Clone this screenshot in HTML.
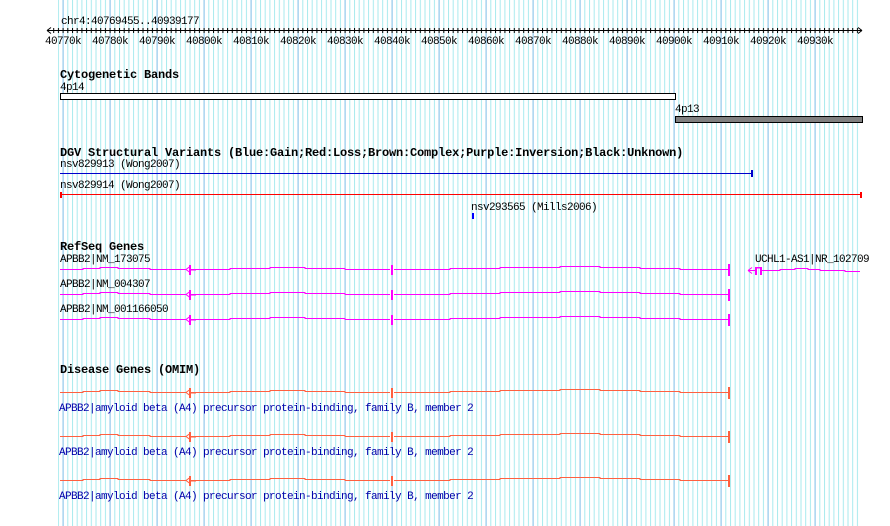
<!DOCTYPE html>
<html><head><meta charset="utf-8"><style>
body{margin:0;background:#fff;width:890px;height:526px;overflow:hidden}
svg{display:block}
text{font-family:"Liberation Mono",monospace;font-size:11px;letter-spacing:-0.6px}
.h{font-weight:bold;font-size:12px;letter-spacing:-0.2px}
</style></head><body>
<svg width="890" height="526" xmlns="http://www.w3.org/2000/svg">
<defs>
<pattern id="mi" x="62.6" y="0" width="4.7" height="10" patternUnits="userSpaceOnUse"><rect x="0" y="0" width="1" height="10" fill="#a8eaee"/></pattern>
<pattern id="ma" x="62.6" y="0" width="47" height="10" patternUnits="userSpaceOnUse"><rect x="0" y="0" width="1" height="10" fill="#88c0ea"/></pattern>
<pattern id="tk" x="62.6" y="0" width="4.7" height="10" patternUnits="userSpaceOnUse"><rect x="0" y="0" width="1" height="10" fill="#000"/></pattern>
</defs>
<rect x="58" y="0" width="803" height="526" fill="url(#mi)"/>
<rect x="58" y="0" width="803" height="526" fill="url(#ma)"/>
<!-- axis -->
<text x="61" y="24">chr4:40769455..40939177</text>
<line x1="47" y1="30.5" x2="862" y2="30.5" stroke="#000"/>
<rect x="50" y="28" width="809" height="5" fill="url(#tk)"/>
<path d="M47 30.5l4-3M47 30.5l4 3M862 30.5l-4-3M862 30.5l-4 3" stroke="#000" fill="none"/>
<g>
<text x="45" y="44">40770k</text><text x="92" y="44">40780k</text><text x="139" y="44">40790k</text><text x="186" y="44">40800k</text><text x="233" y="44">40810k</text><text x="280" y="44">40820k</text><text x="327" y="44">40830k</text><text x="374" y="44">40840k</text><text x="421" y="44">40850k</text><text x="468" y="44">40860k</text><text x="515" y="44">40870k</text><text x="562" y="44">40880k</text><text x="609" y="44">40890k</text><text x="656" y="44">40900k</text><text x="703" y="44">40910k</text><text x="750" y="44">40920k</text><text x="797" y="44">40930k</text>
</g>
<!-- cyto -->
<text class="h" x="60" y="78">Cytogenetic Bands</text>
<text x="60" y="90">4p14</text>
<rect x="60.5" y="93.5" width="615" height="6" fill="#fff" stroke="#000"/>
<text x="675" y="112">4p13</text>
<rect x="675.5" y="116.5" width="187" height="6" fill="#808080" stroke="#000"/>
<!-- DGV -->
<text class="h" x="60" y="156">DGV Structural Variants (Blue:Gain;Red:Loss;Brown:Complex;Purple:Inversion;Black:Unknown)</text>
<text x="60" y="167">nsv829913 (Wong2007)</text>
<line x1="60" y1="173.5" x2="752" y2="173.5" stroke="#0000cc"/>
<rect x="751" y="170" width="2" height="7" fill="#0000cc"/>
<text x="60" y="188">nsv829914 (Wong2007)</text>
<line x1="60" y1="194.5" x2="862" y2="194.5" stroke="#ff0000"/>
<rect x="60" y="192" width="2" height="6" fill="#f00"/><rect x="860" y="192" width="2" height="6" fill="#f00"/>
<text x="471" y="210">nsv293565 (Mills2006)</text>
<rect x="472" y="213" width="2" height="6" fill="#0000ff"/>
<!-- RefSeq -->
<text class="h" x="60" y="250">RefSeq Genes</text>
<text x="60" y="262">APBB2|NM_173075</text>
<text x="60" y="287">APBB2|NM_004307</text>
<text x="60" y="312">APBB2|NM_001166050</text>
<g id="g1">
<polyline points="60,269.5 83,269.5 83,268.5 100,268.5 100,267.5 118,267.5 118,268.5 150,268.5 150,269.5 186,269.5" fill="none" stroke="#ff00ff"/>
<polyline points="196,269.5 230,269.5 230,268.5 270,268.5 270,267.5 305,267.5 305,268.5 345,268.5 345,269.5 390,269.5" fill="none" stroke="#ff00ff"/>
<polyline points="394,269.5 450,269.5 450,268.5 500,268.5 500,267.5 560,267.5 560,266.5 600,266.5 600,267.5 640,267.5 640,268.5 680,268.5 680,269.5 729,269.5" fill="none" stroke="#ff00ff"/>
<path d="M186 269.5l4-3M186 269.5l4 3" stroke="#ff00ff" fill="none"/>
<rect x="189" y="265" width="2" height="10" fill="#ff00ff"/><rect x="189" y="269" width="7" height="1.5" fill="#ff00ff"/>
<rect x="391" y="265" width="2" height="10" fill="#ff00ff"/>
<rect x="728" y="264" width="2" height="12" fill="#ff00ff"/>
</g>
<use href="#g1" y="25"/>
<use href="#g1" y="50"/>
<text x="755" y="262">UCHL1-AS1|NR_102709</text>
<path d="M748 270.5l4-3M748 270.5l4 3M748 270.5h8" stroke="#ff00ff" fill="none"/>
<rect x="755" y="267" width="2" height="8" fill="#ff00ff"/><rect x="760" y="267" width="2" height="8" fill="#ff00ff"/><rect x="757" y="267" width="3" height="1.5" fill="#ff00ff"/>
<polyline points="762,270.5 780,270.5 780,269.5 795,269.5 795,268.5 808,268.5 808,269.5 820,269.5 820,270.5 845,270.5 845,271.5 860,271.5" fill="none" stroke="#ff00ff"/>
<!-- Disease -->
<text class="h" x="60" y="373">Disease Genes (OMIM)</text>
<g id="d1">
<polyline points="60,392.5 83,392.5 83,391.5 100,391.5 100,390.5 118,390.5 118,391.5 150,391.5 150,392.5 186,392.5" fill="none" stroke="#ff6040"/>
<polyline points="196,392.5 230,392.5 230,391.5 270,391.5 270,390.5 305,390.5 305,391.5 345,391.5 345,392.5 390,392.5" fill="none" stroke="#ff6040"/>
<polyline points="394,392.5 450,392.5 450,391.5 500,391.5 500,390.5 560,390.5 560,389.5 600,389.5 600,390.5 640,390.5 640,391.5 680,391.5 680,392.5 729,392.5" fill="none" stroke="#ff6040"/>
<path d="M186 392.5l4-3M186 392.5l4 3" stroke="#ff6040" fill="none"/>
<rect x="189" y="388" width="2" height="10" fill="#ff6040"/><rect x="189" y="392" width="7" height="1.5" fill="#ff6040"/>
<rect x="391" y="388" width="2" height="10" fill="#ff6040"/>
<rect x="728" y="387" width="2" height="12" fill="#ff6040"/>
<text x="59" y="411" fill="#0000aa">APBB2|amyloid beta (A4) precursor protein-binding, family B, member 2</text>
</g>
<use href="#d1" y="44"/>
<use href="#d1" y="88"/>
</svg>
</body></html>
